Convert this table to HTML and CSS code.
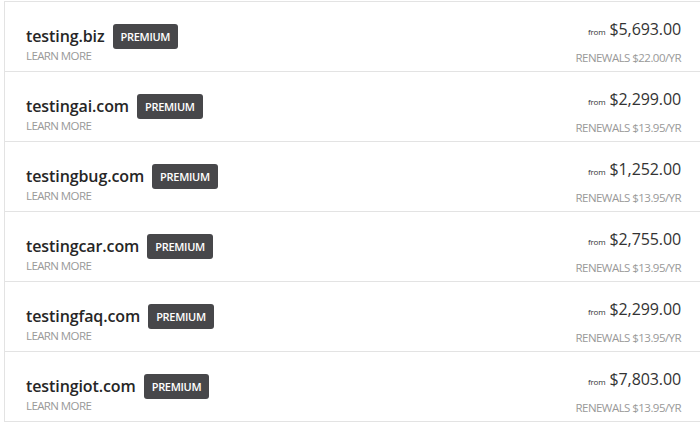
FILE: index.html
```html
<!DOCTYPE html>
<html>
<head>
<meta charset="utf-8">
<link rel="stylesheet" href="styles.css">
</head>
<body>
<div class="list">
  <div class="row">
    <div class="info">
      <div class="title"><span class="domain">testing.biz</span><span class="badge">PREMIUM</span></div>
      <a class="learn">LEARN MORE</a>
    </div>
    <div class="price">
      <div class="amount"><span class="from">from</span> $5,693.00</div>
      <div class="renew">RENEWALS $22.00/YR</div>
    </div>
  </div>
  <div class="row">
    <div class="info">
      <div class="title"><span class="domain">testingai.com</span><span class="badge">PREMIUM</span></div>
      <a class="learn">LEARN MORE</a>
    </div>
    <div class="price">
      <div class="amount"><span class="from">from</span> $2,299.00</div>
      <div class="renew">RENEWALS $13.95/YR</div>
    </div>
  </div>
  <div class="row">
    <div class="info">
      <div class="title"><span class="domain">testingbug.com</span><span class="badge">PREMIUM</span></div>
      <a class="learn">LEARN MORE</a>
    </div>
    <div class="price">
      <div class="amount"><span class="from">from</span> $1,252.00</div>
      <div class="renew">RENEWALS $13.95/YR</div>
    </div>
  </div>
  <div class="row">
    <div class="info">
      <div class="title"><span class="domain">testingcar.com</span><span class="badge">PREMIUM</span></div>
      <a class="learn">LEARN MORE</a>
    </div>
    <div class="price">
      <div class="amount"><span class="from">from</span> $2,755.00</div>
      <div class="renew">RENEWALS $13.95/YR</div>
    </div>
  </div>
  <div class="row">
    <div class="info">
      <div class="title"><span class="domain">testingfaq.com</span><span class="badge">PREMIUM</span></div>
      <a class="learn">LEARN MORE</a>
    </div>
    <div class="price">
      <div class="amount"><span class="from">from</span> $2,299.00</div>
      <div class="renew">RENEWALS $13.95/YR</div>
    </div>
  </div>
  <div class="row">
    <div class="info">
      <div class="title"><span class="domain">testingiot.com</span><span class="badge">PREMIUM</span></div>
      <a class="learn">LEARN MORE</a>
    </div>
    <div class="price">
      <div class="amount"><span class="from">from</span> $7,803.00</div>
      <div class="renew">RENEWALS $13.95/YR</div>
    </div>
  </div>
</div>
</body>
</html>
```
FILE: styles.css
```css
html, body {
  margin: 0;
  padding: 0;
  background: #fff;
}
body {
  font-family: "Open Sans", "Liberation Sans", sans-serif;
  color: #333;
  width: 700px;
  height: 422px;
  overflow: hidden;
}
.list {
  margin: 1px 0 0 4px;
  border-left: 1px solid #e3e3e3;
  border-top: 1px solid #e3e3e3;
}
.row {
  border-bottom: 1px solid #e3e3e3;
  display: flex;
  justify-content: space-between;
  align-items: flex-start;
  padding: 0 19px 0 21px;
  box-sizing: border-box;
  height: 70px;
}
.info {
  display: flex;
  flex-direction: column;
  padding-top: 22px;
}
.title {
  display: flex;
  align-items: center;
  gap: 8px;
  height: 25px;
}
.domain {
  font-size: 16px;
  font-weight: 600;
  color: #262626;
  letter-spacing: -0.1px;
  line-height: 25px;
}
.badge {
  background: #47474a;
  color: #fff;
  font-size: 11px;
  font-weight: 600;
  border-radius: 3px;
  padding: 0 8px;
  height: 25px;
  line-height: 25px;
  letter-spacing: -0.3px;
}
.learn {
  font-size: 11.5px;
  color: #999;
  letter-spacing: -0.6px;
  line-height: 14px;
  margin-top: 0;
}
.price {
  text-align: right;
  display: flex;
  flex-direction: column;
  align-items: flex-end;
  padding-top: 16px;
}
.amount {
  font-size: 16px;
  color: #333;
  line-height: 22px;
  letter-spacing: -0.1px;
}
.from {
  font-size: 8px;
  letter-spacing: -0.2px;
}
.renew {
  font-size: 11.5px;
  color: #999;
  letter-spacing: -0.55px;
  line-height: 14px;
  margin-top: 8px;
}
```
